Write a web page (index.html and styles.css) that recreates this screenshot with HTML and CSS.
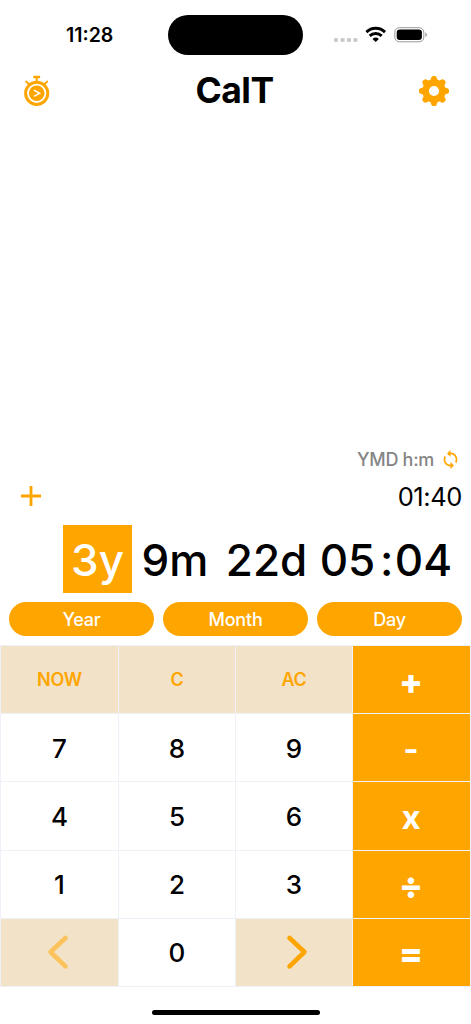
FILE: index.html
```
<!DOCTYPE html>
<html lang="en">
<head>
<meta charset="utf-8">
<title>CalT</title>
<link rel="stylesheet" href="styles.css">
</head>
<body>
<main class="app">
  <div class="status">
    <div class="clock"><span>11:28</span></div>
    <div class="island"></div>
    <div class="indicators">
      <svg width="94" height="18" viewBox="0 0 94 18">
        <g fill="#cbcbcb"><rect x="0" y="12" width="4" height="4" rx="1.3"/><rect x="6.6" y="12" width="4" height="4" rx="1.3"/><rect x="13" y="12" width="4" height="4" rx="1.3"/><rect x="19.4" y="12" width="4" height="4" rx="1.3"/></g>
        <g fill="none" stroke="#000" stroke-width="2.9"><path d="M32.4 6.1a13.2 13.2 0 0 1 18.6 0"/><path d="M35.7 9.9a8.7 8.7 0 0 1 12 0"/></g>
        <path d="M38.5 12.9a4.7 4.7 0 0 1 6.4 0L41.7 16z"/>
        <rect x="60.8" y="1.7" width="29" height="14.1" rx="4.5" fill="none" stroke="#999"/>
        <rect x="62.7" y="3.6" width="25.2" height="10.3" rx="3"/>
        <path d="M91.4 6.6c2 .7 2 3.7 0 4.4z" fill="#999"/>
      </svg>
    </div>
  </div>

  <header class="header">
    <svg class="stopwatch" width="28" height="32" viewBox="0 0 28 32">
      <g fill="none" stroke="#ffa500">
        <circle cx="13.7" cy="18.3" r="11.1" stroke-width="3"/>
        <path d="M11.4 2h4.6" stroke-width="2.6" stroke-linecap="round"/>
        <path d="M13.7 2v5" stroke-width="2"/>
        <path d="M3.2 6.6l2.5 2.3M24.2 6.6l-2.5 2.3" stroke-width="2" stroke-linecap="round"/>
      </g>
      <circle cx="13.7" cy="18.3" r="7.8" fill="#ffa500"/>
      <path d="M10.9 15.2l5.7 3.1-5.7 3.1" fill="none" stroke="#fff" stroke-width="1.5"/>
    </svg>
    <h1 class="title">CalT</h1>
    <svg class="gear" width="32" height="32" viewBox="-16 -16 32 32" fill="#ffa500">
      <circle r="8.4" fill="none" stroke="#ffa500" stroke-width="6.6"/>
      <path id="tooth" d="M-3.6-10.8L-2.7-13.4Q-2.2-15 -1-15H1Q2.2-15 2.7-13.4L3.6-10.8z"/>
      <use href="#tooth" transform="rotate(45)"/><use href="#tooth" transform="rotate(90)"/><use href="#tooth" transform="rotate(135)"/>
      <use href="#tooth" transform="rotate(180)"/><use href="#tooth" transform="rotate(225)"/><use href="#tooth" transform="rotate(270)"/><use href="#tooth" transform="rotate(315)"/>
    </svg>
  </header>

  <section class="history"></section>

  <div class="format">
    <span class="format-name">YMD h:m</span>
    <svg width="15" height="19" viewBox="3.5 1 17 22" fill="#ffa500">
      <path d="M12 4V1L8 5l4 4V6c3.31 0 6 2.69 6 6 0 1.01-.25 1.97-.7 2.8l1.46 1.46C19.54 15.03 20 13.57 20 12c0-4.42-3.58-8-8-8zm0 14c-3.31 0-6-2.69-6-6 0-1.01.25-1.97.7-2.8L5.24 7.74C4.46 8.97 4 10.43 4 12c0 4.42 3.58 8 8 8v3l4-4-4-4v3z"/>
    </svg>
  </div>

  <div class="previous">
    <svg width="20" height="20" viewBox="0 0 20 20"><path d="M0 10h20M10 0v20" stroke="#ffa500" stroke-width="2.8"/></svg>
    <span class="previous-time">01:40</span>
  </div>

  <div class="entry">
    <span class="unit active">3y</span>
    <span class="unit month">9m</span>
    <span class="unit day">22d</span>
    <span class="unit hour">05</span>
    <span class="unit colon">:</span>
    <span class="unit minute">04</span>
  </div>

  <nav class="units">
    <button>Year</button><button>Month</button><button>Day</button>
  </nav>

  <section class="keypad">
    <button class="key soft">NOW</button><button class="key soft">C</button><button class="key soft">AC</button><button class="key op sign">+</button>
    <button class="key">7</button><button class="key">8</button><button class="key">9</button><button class="key op">-</button>
    <button class="key">4</button><button class="key">5</button><button class="key">6</button><button class="key op">x</button>
    <button class="key">1</button><button class="key">2</button><button class="key">3</button><button class="key op sign">÷</button>
    <button class="key soft left"><svg width="22" height="36" viewBox="0 0 22 36"><path d="M18.5 4L3.5 18l15 14.4" fill="none" stroke="#fcc25c" stroke-width="4.6" stroke-linecap="round" stroke-linejoin="round"/></svg></button>
    <button class="key">0</button>
    <button class="key soft right"><svg width="22" height="36" viewBox="0 0 22 36"><path d="M3.5 4l15 14-15 14.4" fill="none" stroke="#ffa500" stroke-width="4.6" stroke-linecap="round" stroke-linejoin="round"/></svg></button>
    <button class="key op sign">=</button>
  </section>

  <footer class="home"><div class="home-bar"></div></footer>
</main>
</body>
</html>
```

FILE: styles.css
```
* { box-sizing: border-box; }
body { margin: 0; background: #fff; color: #000; font-family: Inter, "Liberation Sans", sans-serif; }
button { margin: 0; padding: 0; border: 0; font: inherit; color: inherit; }
svg { display: block; flex: none; }

.app { width: 471px; height: 1024px; display: flex; flex-direction: column; overflow: hidden; }

.status { height: 69px; display: grid; grid-template-columns: 168px 135px 1fr; align-items: center; }
.clock { padding: 1px 0 0 66px; font-size: 19.5px; font-weight: 600; white-space: nowrap; }
.island { height: 40px; border-radius: 20px; background: #000; }
.indicators { padding-left: 31px; }

.header { height: 43px; padding: 0 21px 0 23px; display: flex; align-items: center; justify-content: space-between; }
.title { margin: 0; font-size: 35.5px; font-weight: 700; line-height: 43px; letter-spacing: -0.5px; }

.history { flex: 1; }

.format { height: 24px; padding-right: 13px; display: flex; align-items: center; justify-content: flex-end; gap: 9px; color: #858585; font-size: 18px; font-weight: 500; }
.format-name { letter-spacing: -0.3px; }

.previous { height: 50px; padding: 0 9px 0 21px; display: flex; align-items: center; justify-content: space-between; font-size: 25.5px; }
.previous-time { letter-spacing: -0.4px; }

.entry { height: 72px; padding: 4px 16px 0 63px; display: flex; font-size: 44px; font-weight: 500; line-height: 70px; white-space: nowrap; }
.unit { text-align: center; }
.active { width: 69px; height: 68px; background: #ffa500; color: #fff; }
.month { width: 86px; }
.day { width: 97px; }
.hour { width: 65px; }
.colon { width: 12px; }
.minute { flex: 1; }

.units { height: 52px; padding: 9px 9px; display: grid; grid-template-columns: repeat(3, 1fr); gap: 9px; }
.units button { height: 34px; border-radius: 17px; background: #ffa500; color: #fff; font-size: 18px; font-weight: 500; letter-spacing: -0.2px; }

.keypad { height: 342px; width: 471px; padding: 1px; display: grid; grid-template-columns: 117px 116px 116px 1fr; grid-template-rows: repeat(5, 1fr); gap: 1px; background: #eff1f8; }
.key { display: flex; align-items: center; justify-content: center; background: #fff; font-size: 26px; font-weight: 500; padding-top: 1px; }
.soft { background: #f2e3c8; color: #ffa500; font-size: 18px; font-weight: 600; letter-spacing: -0.2px; padding-top: 0; }
.op { background: #ffa500; color: #fff; font-size: 33px; font-weight: 700; padding: 2px 1px 0 0; }
.sign { font-size: 35px; font-weight: 800; }
.left { padding-right: 3px; }
.right { padding-left: 5px; }

.home { height: 37px; display: flex; justify-content: center; padding-top: 23px; }
.home-bar { width: 168px; height: 5px; border-radius: 3px; background: #000; }
```
